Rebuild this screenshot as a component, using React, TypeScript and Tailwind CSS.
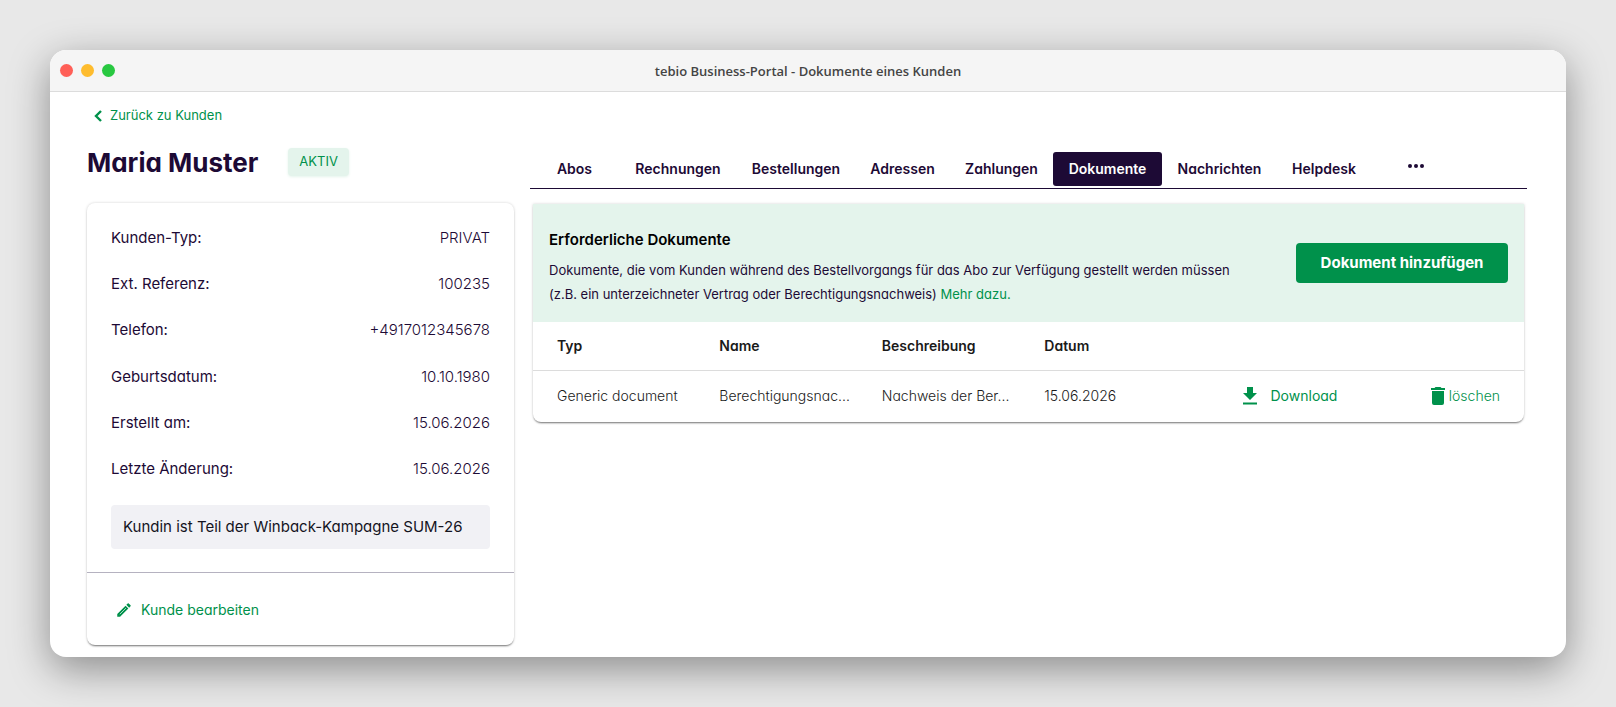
const details = [
  { label: "Kunden-Typ:", value: "PRIVAT" },
  { label: "Ext. Referenz:", value: "100235" },
  { label: "Telefon:", value: "+4917012345678" },
  { label: "Geburtsdatum:", value: "10.10.1980" },
  { label: "Erstellt am:", value: "15.06.2026" },
  { label: "Letzte Änderung:", value: "15.06.2026" },
];

const tabs = [
  "Abos",
  "Rechnungen",
  "Bestellungen",
  "Adressen",
  "Zahlungen",
  "Dokumente",
  "Nachrichten",
  "Helpdesk",
];

const documents = [
  {
    type: "Generic document",
    name: "Berechtigungsnac...",
    description: "Nachweis der Ber...",
    date: "15.06.2026",
  },
];

function TitleBar() {
  return (
    <header className="grid h-[42px] grid-cols-[1fr_auto_1fr] items-center border-b border-[#dcdcdc] bg-[#f5f5f5] px-2.5">
      <div className="flex gap-2">
        <span className="size-[13px] rounded-full bg-[#ff5f57]" />
        <span className="size-[13px] rounded-full bg-[#febc2e]" />
        <span className="size-[13px] rounded-full bg-[#28c840]" />
      </div>
      <p className="font-['Open_Sans',sans-serif] text-[13px] leading-5 font-semibold text-[#444]">
        tebio Business-Portal - Dokumente eines Kunden
      </p>
    </header>
  );
}

function CustomerCard() {
  return (
    <section className="rounded-lg bg-white text-[15px] leading-6 shadow-[0_2px_2px_-1px_rgba(0,0,0,0.5),0_0_3px_rgba(0,0,0,0.18)]">
      <div className="px-6 pt-[23px] pb-[23px]">
        <dl className="flex h-[255px] flex-col justify-between">
          {details.map((d) => (
            <div key={d.label} className="flex justify-between">
              <dt>{d.label}</dt>
              <dd className="font-light">{d.value}</dd>
            </div>
          ))}
        </dl>
        <p className="mt-6 rounded-sm bg-[#f1f1f5] px-3 py-2.5 text-[#14141e]">
          Kundin ist Teil der Winback-Kampagne SUM-26
        </p>
      </div>
      <div className="border-t border-[#b5b2c0] px-7 pt-[25px] pb-[23px]">
        <a href="#bearbeiten" className="flex items-center gap-2 text-sm leading-6 text-[#00914b]">
          <svg viewBox="0 0 24 24" className="size-[18px]" fill="currentColor" aria-hidden="true">
            <path d="M3 17.25V21h3.75L17.81 9.94l-3.75-3.75L3 17.25zM20.71 7.04a1 1 0 0 0 0-1.41l-2.34-2.34a1 1 0 0 0-1.41 0l-1.83 1.83 3.75 3.75 1.83-1.83z" />
            <path d="M6.4 17.6 14.6 9.4" stroke="#fff" strokeWidth="0.9" />
          </svg>
          Kunde bearbeiten
        </a>
      </div>
    </section>
  );
}

function Tabs() {
  return (
    <nav className="grid grid-cols-[89fr_118fr_118fr_95fr_103fr_109fr_115fr_94fr_90fr_66fr] border-b border-[#1d0a35] pb-0.5 text-sm font-semibold">
      {tabs.map((t) => (
        <button
          key={t}
          type="button"
          className={
            t === "Dokumente"
              ? "h-[34px] rounded-[3px] bg-[#1d0a35] text-white"
              : "h-[34px] text-[#1d0a35]"
          }
        >
          {t}
        </button>
      ))}
      <button type="button" aria-label="Mehr" className="flex h-7 items-center justify-center">
        <svg viewBox="0 0 16 4" className="h-1 w-4" fill="#1d0a35" aria-hidden="true">
          <circle cx="2" cy="2" r="2" />
          <circle cx="8" cy="2" r="2" />
          <circle cx="14" cy="2" r="2" />
        </svg>
      </button>
    </nav>
  );
}

function DocumentsPanel() {
  return (
    <section className="mx-[3px] mt-[15px] rounded-b-lg bg-white shadow-[0_2px_2px_-1px_rgba(0,0,0,0.5),0_0_3px_rgba(0,0,0,0.18)]">
      <div className="flex items-start justify-between gap-6 bg-[#e4f4ec] px-4 pt-6 pb-4">
        <div>
          <h2 className="pb-1.5 text-[15px] leading-6 font-semibold text-black">Erforderliche Dokumente</h2>
          <p className="text-[13px] leading-6">
            Dokumente, die vom Kunden während des Bestellvorgangs für das Abo zur Verfügung gestellt werden müssen
            <br />
            (z.B. ein unterzeichneter Vertrag oder Berechtigungsnachweis){" "}
            <a href="#mehr" className="text-[#00914b]">
              Mehr dazu.
            </a>
          </p>
        </div>
        <button
          type="button"
          className="mt-[15px] h-10 w-[212px] shrink-0 rounded bg-[#00914b] text-[15px] font-bold text-white"
        >
          Dokument hinzufügen
        </button>
      </div>
      <table className="w-full table-fixed text-left text-sm text-[#1a1a1a]">
        <thead>
          <tr className="h-12 border-b border-[#dcdcdc]">
            <th className="w-[18.8%] pl-6 font-semibold">Typ</th>
            <th className="w-[16.4%] font-semibold">Name</th>
            <th className="w-[16.4%] font-semibold">Beschreibung</th>
            <th className="w-[16.4%] font-semibold">Datum</th>
            <th aria-label="Download" />
            <th aria-label="Löschen" />
          </tr>
        </thead>
        <tbody>
          {documents.map((d) => (
            <tr key={d.name} className="h-[52px] font-light">
              <td className="pl-6">{d.type}</td>
              <td>{d.name}</td>
              <td>{d.description}</td>
              <td>{d.date}</td>
              <td className="pr-7">
                <a href="#download" className="flex items-center justify-end gap-3.5 font-normal text-[#00914b]">
                  <svg viewBox="0 0 14 18" className="h-[18px] w-3.5" fill="currentColor" aria-hidden="true">
                    <path d="M4 0h6v6h4l-7 7-7-7h4zM0 15.500h14v2H0z" />
                  </svg>
                  Download
                </a>
              </td>
              <td className="pr-6">
                <button type="button" className="flex w-full items-center justify-end gap-1 text-[#00914b]">
                  <svg viewBox="0 0 14 18" className="h-[18px] w-3.5" fill="currentColor" aria-hidden="true">
                    <path d="M1 4h12v12a2 2 0 0 1-2 2H3a2 2 0 0 1-2-2zM14 1v2H0V1h3.500l1-1h5l1 1z" />
                  </svg>
                  löschen
                </button>
              </td>
            </tr>
          ))}
        </tbody>
      </table>
    </section>
  );
}

export default function App() {
  return (
    <div className="min-h-screen bg-[#e8e8e8] p-[50px]">
      <div className="overflow-hidden rounded-2xl bg-white shadow-[0_12px_40px_rgba(0,0,0,0.4)]">
        <TitleBar />
        <main className="grid grid-cols-[427fr_997fr] gap-4 pt-3 pr-[39px] pb-3 pl-[37px] font-['Inter',sans-serif] text-base text-[#1d0a35] [font-feature-settings:'cv11']">
          <div>
            <a href="#kunden" className="flex h-6 items-center gap-2 pl-[7px] text-[13px] text-[#00914b]">
              <svg viewBox="0 0 8 12" className="h-3 w-2" fill="none" stroke="currentColor" strokeWidth="2.4" aria-hidden="true">
                <path d="M7 1 2 6l5 5" />
              </svg>
              Zurück zu Kunden
            </a>
            <div className="mt-4 mb-[22px] flex h-[37px] items-center gap-[30px]">
              <h1 className="text-[26px] leading-9 font-bold">Maria Muster</h1>
              <span className="mb-0.5 rounded bg-[#e4f4ec] px-[11px] pt-[3px] pb-[5px] text-[13px] leading-5 text-[#00914b] shadow-[0_1px_3px_#e4f4ec]">
                AKTIV
              </span>
            </div>
            <CustomerCard />
          </div>
          <div className="pt-12">
            <Tabs />
            <DocumentsPanel />
          </div>
        </main>
      </div>
    </div>
  );
}
